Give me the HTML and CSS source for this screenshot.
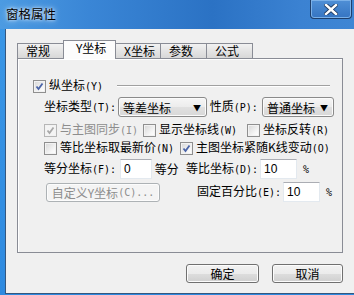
FILE: index.html
```html
<!DOCTYPE html>
<html lang="zh-CN">
<head>
    <meta charset="UTF-8">
    <title>窗格属性</title>
    <link rel="stylesheet" href="styles.css">
</head>
<body>
    <div class="win">
        <div class="titlebar">
            <div class="title">窗格属性</div>
            <div class="close">
                <svg width="14" height="11" viewBox="0 0 14 11">
                    <path d="M2 1 L12 10 M12 1 L2 10" stroke="#203a60" stroke-width="4.2" stroke-linecap="square"/>
                    <path d="M2 1 L12 10 M12 1 L2 10" stroke="#fff" stroke-width="2.4" stroke-linecap="square"/>
                </svg>
            </div>
        </div>
        <div class="client">
            <div class="tabs">
                <div class="tab" style="width:47px">常规</div>
                <div class="tab on">Y坐标</div>
                <div class="tab" style="width:46px">X坐标</div>
                <div class="tab">参数</div>
                <div class="tab">公式</div>
            </div>
            <div class="panel">
                <div class="row r1">
                    <span class="chk on"></span>
                    <span class="lbl">纵坐标<span class="k">(Y)</span></span>
                    <span class="gline"></span>
                </div>
                <div class="row r2 in">
                    <span class="lbl w74">坐标类型<span class="k">(T):</span></span>
                    <span class="combo" style="width:89px">等差坐标<i>▼</i></span>
                    <span class="lbl w55">&nbsp;性质<span class="k">(P):</span></span>
                    <span class="combo" style="width:72px">普通坐标<i>▼</i></span>
                </div>
                <div class="row r3 in">
                    <span class="cell w99 off"><span class="chk on dis"></span><span class="lbl">与主图同步<span class="k">(I)</span></span></span>
                    <span class="cell w104"><span class="chk"></span><span class="lbl">显示坐标线<span class="k">(W)</span></span></span>
                    <span class="cell"><span class="chk"></span><span class="lbl">坐标反转<span class="k">(R)</span></span></span>
                </div>
                <div class="row r3 in">
                    <span class="cell w136"><span class="chk"></span><span class="lbl">等比坐标取最新价<span class="k">(N)</span></span></span>
                    <span class="cell"><span class="chk on"></span><span class="lbl">主图坐标紧随K线变动<span class="k">(O)</span></span></span>
                </div>
                <div class="row r5 in">
                    <span class="lbl w76">等分坐标<span class="k">(F):</span></span>
                    <span class="edit" style="width:32px">0</span>
                    <span class="lbl w34">&nbsp;等分</span>
                    <span class="lbl rt w74">等比坐标<span class="k">(D):</span></span>
                    <span class="edit" style="width:37px">10</span>
                    <span class="pct">%</span>
                </div>
                <div class="row r6 in">
                    <span class="btn dis">自定义Y坐标<span class="k">(C)...</span></span>
                    <span class="lbl rt w104b">固定百分比<span class="k">(E):</span></span>
                    <span class="edit" style="width:37px">10</span>
                    <span class="pct">%</span>
                </div>
            </div>
            <div class="foot">
                <span class="btn big" style="width:73px">确定</span>
                <span class="btn big" style="width:71px">取消</span>
            </div>
        </div>
    </div>
</body>
</html>
```

FILE: styles.css
```css
body{
    margin: 0;
    width: 354px;
    height: 295px;
    overflow: hidden;
    font-family: "Noto Sans CJK SC", sans-serif;
    font-size: 12px;
    color: #000;
}
.win{
    width: 354px;
    height: 295px;
    box-sizing: border-box;
    padding: 0 0 1px 5px;
    background: linear-gradient(to bottom, #3b97e6, #2e8ae0);
    display: flex;
    flex-direction: column;
}
.titlebar{
    height: 29px;
    margin-left: -5px;
    display: flex;
    align-items: flex-start;
    background: linear-gradient(to right, #4c9be2 0%, #3a86d6 25%, #2b72c4 60%, #3b82d2 85%, #3e86d4 100%);
}
.title{
    padding: 5px 0 0 6px;
    font-size: 12.5px;
    line-height: 18px;
    text-shadow: 0 0 6px #e8f2ff, 0 0 3px #e8f2ff;
}
.close{
    margin-left: auto;
    margin-right: 2px;
    width: 42px;
    height: 19px;
    box-sizing: border-box;
    border: 1px solid #1e3f6c;
    border-top: none;
    border-radius: 0 0 4px 4px;
    box-shadow: inset 0 0 0 1px #7ab0e8;
    background: linear-gradient(to bottom, #4f8fd6, #3574c2);
    display: flex;
    justify-content: center;
    align-items: center;
}
.client{
    flex: 1;
    background: #f0f0f0;
    border-left: 1px solid #34577f;
    border-bottom: 1px solid #34577f;
    padding: 11px 0 0 11px;
}
.tabs{
    display: flex;
    align-items: flex-end;
    height: 18px;
    position: relative;
    z-index: 1;
}
.tab{
    width: 47px;
    height: 15px;
    box-sizing: border-box;
    border: 1px solid #898c95;
    border-bottom: none;
    margin-right: -1px;
    background: linear-gradient(to bottom, #f2f2f2, #e4e4e4 50%, #d8d8d8);
    line-height: 14px;
    padding-left: 8px;
}
.tab.on{
    width: 53px;
    height: 19px;
    margin-bottom: -1px;
    background: #fcfcfc;
    padding-left: 12px;
    line-height: 13px;
}
.panel{
    width: 326px;
    height: 195px;
    box-sizing: border-box;
    border: 1px solid #898c95;
    box-shadow: inset 1px 1px 0 #fff;
    background: #f0f0f0;
    padding-left: 15px;
}
.row{
    display: flex;
    align-items: center;
    white-space: nowrap;
}
.in{
    margin-left: 11px;
}
.r1{
    margin-top: 20px;
    height: 14px;
}
.r2{
    margin-top: 4px;
    height: 20px;
}
.r3{
    height: 18px;
}
.r2 + .r3{
    margin-top: 4px;
}
.r5{
    margin-top: 2px;
    height: 20px;
}
.r6{
    margin-top: 3px;
    height: 20px;
}
.k{
    font-family: "DejaVu Sans Mono", monospace;
    font-size: 10px;
}
.lbl{
    line-height: 14px;
}
.w74{ width: 74px; }
.w55{ width: 55px; }
.w76{ width: 76px; }
.w34{ width: 34px; }
.w99{ width: 99px; }
.w104{ width: 104px; }
.w136{ width: 136px; }
.w104b{ width: 104px; }
.rt{
    text-align: right;
    padding-right: 2px;
    box-sizing: border-box;
}
.cell{
    display: flex;
    align-items: center;
}
.chk{
    width: 13px;
    height: 13px;
    box-sizing: border-box;
    border: 1px solid #8f8f8f;
    background: linear-gradient(135deg, #d6d6d6, #f7f7f7 70%, #fff);
    box-shadow: inset 0 0 0 1px #f2f2f2;
    margin-right: 3px;
    flex: none;
}
.chk.on{
    background-image: url("data:image/svg+xml,%3Csvg xmlns='http://www.w3.org/2000/svg' width='11' height='11'%3E%3Cpath d='M2.5 5.5 L4.5 8 L8.5 2.5' fill='none' stroke='%234a64a8' stroke-width='1.8'/%3E%3C/svg%3E"), linear-gradient(135deg, #d6d6d6, #f7f7f7 70%, #fff);
}
.chk.dis{
    border-color: #b6b6b6;
    background-image: url("data:image/svg+xml,%3Csvg xmlns='http://www.w3.org/2000/svg' width='11' height='11'%3E%3Cpath d='M2.5 5.5 L4.5 8 L8.5 2.5' fill='none' stroke='%23a8a8a8' stroke-width='1.8'/%3E%3C/svg%3E"), linear-gradient(#f4f4f4, #f4f4f4);
}
.off{
    color: #8d8d8d;
}
.gline{
    width: 213px;
    height: 0;
    margin-left: 14px;
    border-top: 1px solid #a0a0a0;
    border-bottom: 1px solid #fff;
}
.combo{
    height: 20px;
    box-sizing: border-box;
    border: 1px solid #8a8a8a;
    border-radius: 3px;
    background: linear-gradient(to bottom, #f6f6f6, #ececec 50%, #e0e0e0 51%, #d8d8d8);
    box-shadow: inset 0 0 0 1px #fbfbfb;
    display: flex;
    align-items: center;
    padding-left: 4px;
    font-size: 12px;
}
.combo i{
    font-style: normal;
    font-size: 8px;
    margin-left: auto;
    margin-right: 5px;
}
.edit{
    height: 20px;
    box-sizing: border-box;
    background: #fff;
    border: 1px solid #e3e9ef;
    border-top-color: #abadb3;
    padding-left: 3px;
    line-height: 18px;
    font-family: "Liberation Sans", sans-serif;
}
.pct{
    margin-left: 6px;
    font-family: "DejaVu Sans Mono", monospace;
    font-size: 10px;
}
.btn{
    height: 20px;
    box-sizing: border-box;
    border: 1px solid #707070;
    border-radius: 3px;
    background: linear-gradient(to bottom, #f2f2f2, #ebebeb 50%, #dddddd 51%, #cfcfcf);
    box-shadow: inset 0 0 0 1px #fcfcfc;
    display: flex;
    align-items: center;
    justify-content: center;
}
.btn.dis{
    width: 114px;
    height: 19px;
    margin-left: 2px;
    margin-right: 19px;
    color: #8d8d8d;
    border-color: #adb2b5;
    background: #f4f4f4;
}
.foot{
    display: flex;
    justify-content: flex-end;
    gap: 13px;
    width: 326px;
    margin-top: 11px;
}
.btn.big{
    height: 19px;
}
```
